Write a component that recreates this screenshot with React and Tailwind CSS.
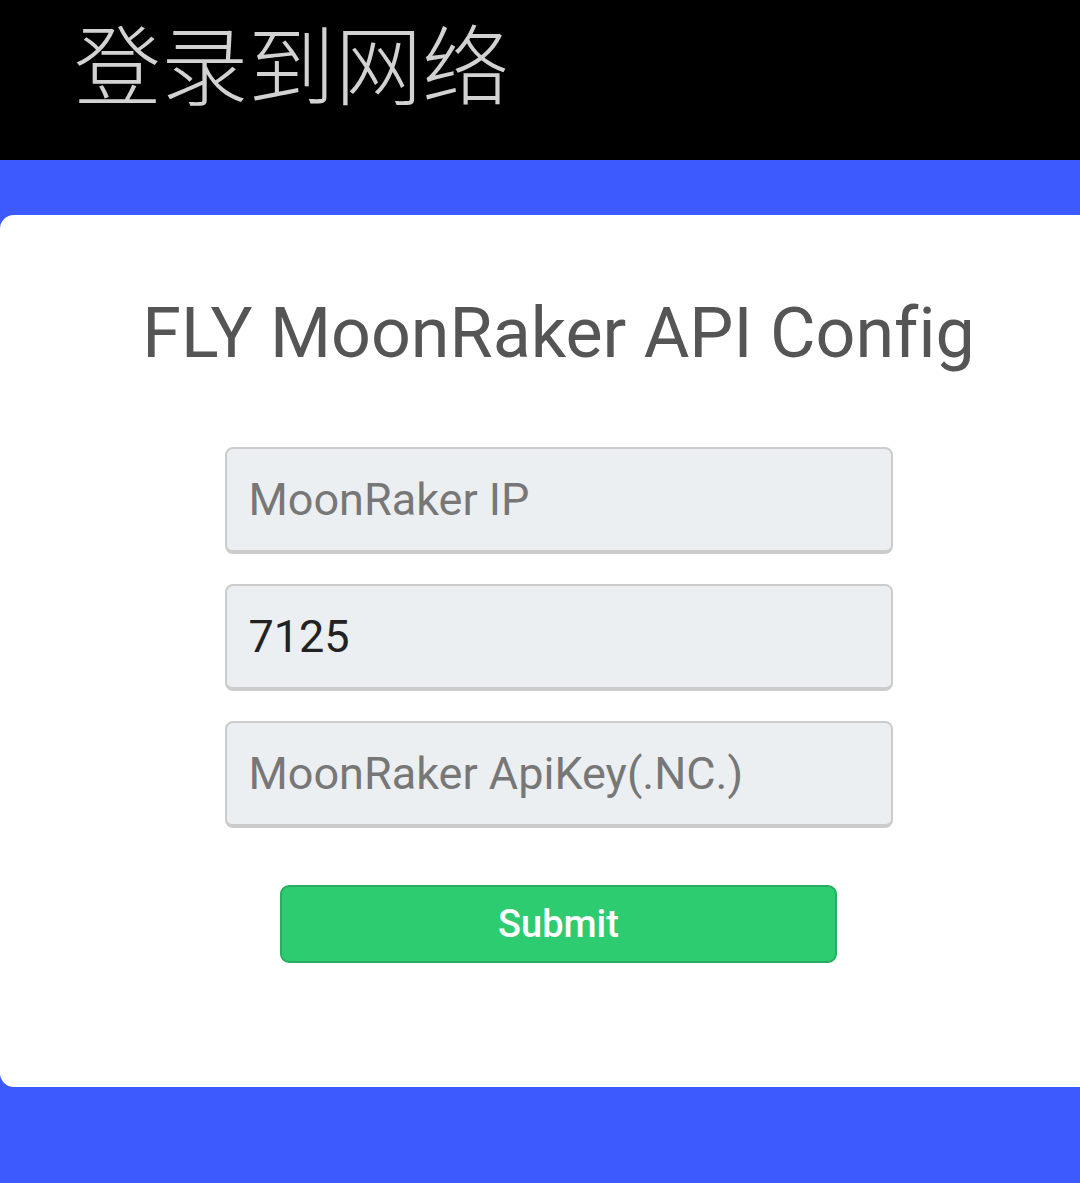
import React, { useState } from "react";

export default function App() {
  const [ip, setIp] = useState("");
  const [port, setPort] = useState("7125");
  const [apiKey, setApiKey] = useState("");

  const handleSubmit = (e) => {
    e.preventDefault();
  };

  const inputClass =
    "w-full h-[107px] px-[22px] bg-[#eceff1] border-2 border-b-4 border-[#cccccc] rounded-[8px] text-[45px] text-[#222] placeholder:text-[#777] outline-none";

  return (
    <div
      className="w-[1080px] h-[1183px] overflow-hidden bg-[#3d5afe]"
      style={{ fontFamily: "Roboto, 'Noto Sans', sans-serif" }}
    >
      {/* header */}
      <header className="h-[160px] bg-black pl-[74px] pt-[9px]">
        <h1
          className="inline-block whitespace-nowrap pr-[8px] text-[87px] leading-[1.2] font-extralight text-[#d2d2d2]"
          style={{ fontFamily: "'Noto Sans CJK SC', 'Noto Sans', sans-serif" }}
        >
          登录到网络
        </h1>
      </header>

      {/* card */}
      <div className="pt-[55px]">
        <div className="w-[1117px] h-[872px] bg-white rounded-l-[14px] flex flex-col items-center">
          <h2 className="mt-[83px] text-[70px] leading-none text-[#555] [font-variant-ligatures:none]">
            FLY MoonRaker API Config
          </h2>

          <form
            onSubmit={handleSubmit}
            className="mt-[79px] w-[668px] flex flex-col gap-[30px]"
          >
            <input
              className={inputClass}
              placeholder="MoonRaker IP"
              value={ip}
              onChange={(e) => setIp(e.target.value)}
            />
            <input
              className={inputClass}
              placeholder="Port"
              value={port}
              onChange={(e) => setPort(e.target.value)}
            />
            <input
              className={inputClass}
              placeholder="MoonRaker ApiKey(.NC.)"
              value={apiKey}
              onChange={(e) => setApiKey(e.target.value)}
            />

            <div className="flex justify-center mt-[27px]">
              <button
                type="submit"
                className="w-[557px] h-[78px] bg-[#2ecc71] border-2 border-[#27ae60] rounded-[9px] text-white text-[38px] font-medium"
              >
                Submit
              </button>
            </div>
          </form>
        </div>
      </div>
    </div>
  );
}
